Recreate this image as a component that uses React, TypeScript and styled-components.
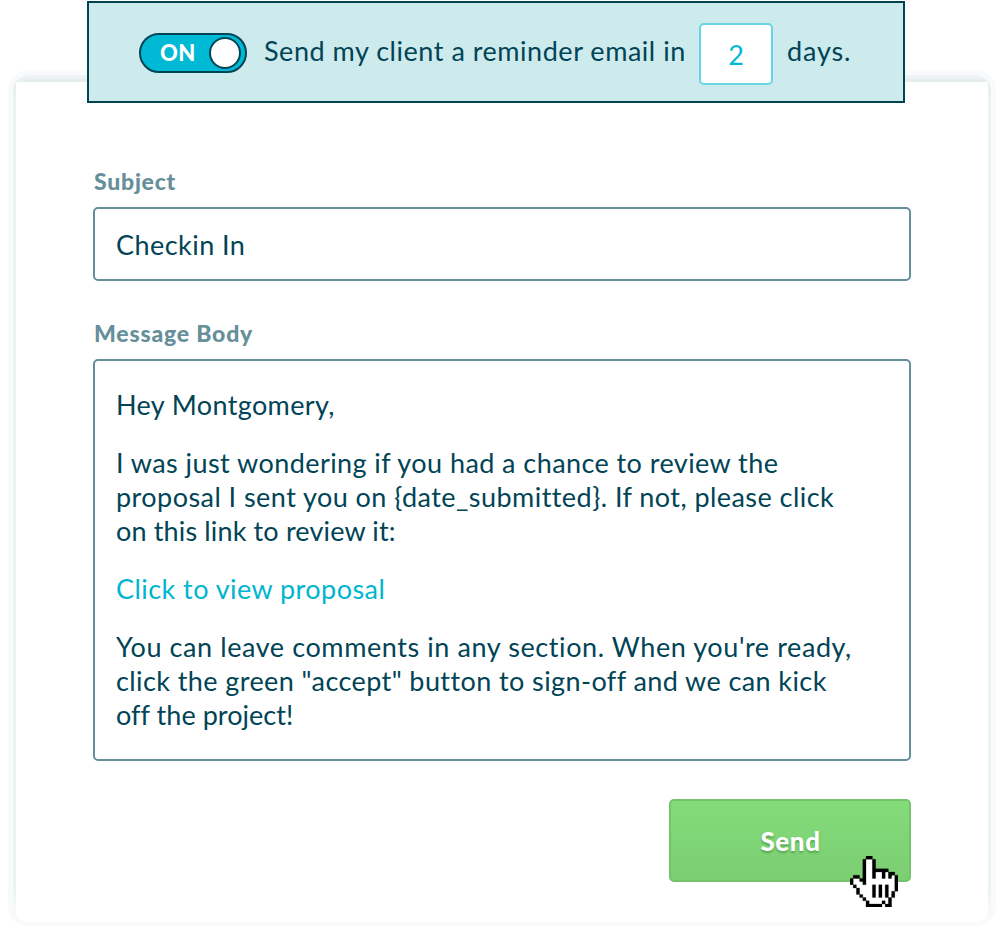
import React from 'react';
import styled, { createGlobalStyle } from 'styled-components';

const Global = createGlobalStyle`
  * { box-sizing: border-box; }
  body {
    margin: 0;
    background: #fff;
    font-family: Lato, 'Liberation Sans', sans-serif;
    color: #014456;
  }
`;

const Page = styled.main`
  width: 1004px;
  height: 934px;
  overflow: hidden;
  display: flex;
  flex-direction: column;
  align-items: flex-start;
  padding-top: 1px;
`;

const Banner = styled.header`
  position: relative;
  z-index: 1;
  flex: none;
  width: 818px;
  height: 102px;
  margin-left: 87px;
  padding-left: 50px;
  display: flex;
  align-items: flex-start;
  background: #cdeaed;
  border: 2px solid #014456;
`;

const Toggle = styled.button`
  width: 108px;
  height: 40px;
  margin-top: 30px;
  padding: 0 4px 0 19px;
  display: flex;
  align-items: center;
  justify-content: space-between;
  border: 2px solid #014456;
  border-radius: 20px;
  background: #00b9d5;
  color: #fff;
  font: 900 22px/34px Lato, sans-serif;
`;

const Knob = styled.span`
  width: 32px;
  height: 32px;
  border: 2px solid #014456;
  border-radius: 50%;
  background: #fff;
`;

const Line = styled.span<{ $track?: number }>`
  display: block;
  width: max-content;
  white-space: nowrap;
  letter-spacing: ${(p) => p.$track ?? 0}px;
`;

const BannerText = styled(Line)<{ $gap: number }>`
  margin: 31px 0 0 ${(p) => p.$gap}px;
  font-size: 27px;
  line-height: 34px;
`;

const Reminder = styled.div`
  width: 452px;
  flex: none;
`;

const DaysBox = styled.div`
  flex: none;
  width: 74px;
  height: 62px;
  margin-top: 20px;
  border: 2px solid #66d5e4;
  border-radius: 5px;
  background: #fff;
  color: #00b9d5;
  font-size: 27px;
  line-height: 59px;
  text-align: center;
`;

const Frame = styled.div`
  flex: none;
  width: 988px;
  height: 856px;
  margin: -33px 0 0 8px;
  padding: 5px 5px 4px;
  border-radius: 20px;
  background: #f8fafb;
`;

const Halo = styled.div`
  height: 847px;
  padding: 7px 3px 0;
  border-radius: 16px 16px 12px 12px;
  background: linear-gradient(#f1f5f5 0, #e5ecec 7px, #ebf3f3 24px, #ebf3f3 815px, #f8fafb 838px);
`;

const Card = styled.section`
  width: 972px;
  height: 840px;
  padding: 85px 77px 0;
  border-radius: 0 0 10px 10px;
  background: #fff;
`;

const Label = styled.label`
  display: block;
  height: 40px;
  padding-left: 1px;
  color: #668f99;
  font-size: 23px;
  font-weight: 900;
  line-height: 28px;
`;

const Field = styled.div`
  height: 74px;
  padding-left: 21px;
  margin-bottom: 38px;
  border: 2px solid #668f99;
  border-radius: 5px;
  font-size: 27px;
  line-height: 71px;
`;

const Message = styled(Field)`
  height: 402px;
  padding-top: 27px;
  line-height: 34px;
`;

const Paragraph = styled.p<{ $link?: boolean }>`
  margin: 0 0 24px;
  color: ${(p) => (p.$link ? '#00b5d0' : 'inherit')};
`;

const Actions = styled.div`
  position: relative;
  display: flex;
  justify-content: flex-end;
`;

const SendButton = styled.button`
  width: 242px;
  height: 83px;
  padding: 0 0 0 1px;
  display: flex;
  align-items: center;
  justify-content: center;
  border: 2px solid #74c36c;
  border-radius: 5px;
  background: linear-gradient(#84dc79, #7bce72);
  color: #fff;
  font: 900 26px/34px Lato, sans-serif;
  letter-spacing: 0.6px;
  text-shadow: 0 2px 2px rgba(40, 110, 40, 0.45);
`;

const Pointer = styled.svg`
  position: absolute;
  right: 13px;
  top: 57px;
  width: 48px;
  height: 51.2px;
`;

// b = outline, w = fill, . = clear
const HAND = [
  '.....bb........',
  '....bwwb.......',
  '....bwwb.......',
  '....bwwb.......',
  '....bwwbbbbb...',
  '....bwwbwwbwbb.',
  '.bb.bwwbwwbwbwb',
  'bwwbbwwwwwwwwwb',
  'bwwwbwwwwwwwwwb',
  '.bwwwwwbwbwbwwb',
  '..bwwwwbwbwbwwb',
  '..bwwwwbwbwbwb.',
  '...bwwwbwbwbwb.',
  '....bwwwwwwwb..',
  '.....bwwwwbwb..',
  '.....bbbbbwbb..',
];

// One path per colour, so that neighbouring cells join without seams.
const cells = (kinds: string) =>
  HAND.flatMap((row, y) =>
    [...row].map((cell, x) => (kinds.includes(cell) ? `M${x} ${y}h1v1h-1z` : '')),
  ).join('');

function HandPointer() {
  return (
    <Pointer viewBox="0 0 15 16">
      <path d={cells('w')} fill="#fff" stroke="#fff" strokeWidth="0.15" />
      <path d={cells('b')} fill="#000" stroke="#000" strokeWidth="0.08" />
    </Pointer>
  );
}

type TextLine = [text: string, track: number];

const message: { link?: boolean; lines: TextLine[] }[] = [
  { lines: [['Hey Montgomery,', 0.37]] },
  {
    lines: [
      ['I was just wondering if you had a chance to review the', 0.43],
      ['proposal I sent you on {date_submitted}. If not, please click', 0.45],
      ['on this link to review it:', 0.15],
    ],
  },
  { link: true, lines: [['Click to view proposal', 0.45]] },
  {
    lines: [
      ["You can leave comments in any section. When you're ready,", 0.59],
      ['click the green "accept" button to sign-off and we can kick', 0.41],
      ['off the project!', 0.05],
    ],
  },
];

export default function App() {
  return (
    <>
      <Global />
      <Page>
        <Banner>
          <Toggle>
            <Line $track={0.3}>ON</Line>
            <Knob />
          </Toggle>
          <Reminder>
            <BannerText $gap={17} $track={0.53}>Send my client a reminder email in</BannerText>
          </Reminder>
          <DaysBox>2</DaysBox>
          <BannerText $gap={14} $track={0.85}>days.</BannerText>
        </Banner>
        <Frame>
          <Halo>
            <Card>
              <Label><Line $track={0.75}>Subject</Line></Label>
              <Field><Line $track={0.45}>Checkin In</Line></Field>
              <Label><Line $track={0.8}>Message Body</Line></Label>
              <Message>
                {message.map((p, i) => (
                  <Paragraph key={i} $link={p.link}>
                    {p.lines.map(([text, track]) => (
                      <Line key={text} $track={track}>{text}</Line>
                    ))}
                  </Paragraph>
                ))}
              </Message>
              <Actions>
                <SendButton>Send</SendButton>
                <HandPointer />
              </Actions>
            </Card>
          </Halo>
        </Frame>
      </Page>
    </>
  );
}
